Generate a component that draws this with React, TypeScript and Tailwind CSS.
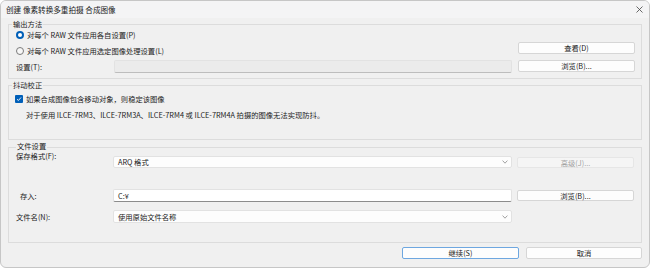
import React from "react";

const FONT = "font-['Noto_Sans_CJK_SC','Noto_Sans',sans-serif]";
const T = "text-[7.3px] leading-[10px] text-[#222]";

function Btn({
  children,
  className = "",
  disabled = false,
  primary = false,
}: {
  children: React.ReactNode;
  className?: string;
  disabled?: boolean;
  primary?: boolean;
}) {
  const base =
    "flex items-center justify-center rounded-[2px] border text-[7.3px] leading-[10px]";
  const look = disabled
    ? "bg-[#f5f5f5] border-[#e6e6e6] text-[#a3a3a3]"
    : primary
    ? "bg-[#fdfdfd] border-[#6ea7e0] text-[#222]"
    : "bg-[#fdfdfd] border-[#d6d6d6] text-[#222]";
  return <div className={`${base} ${look} ${className}`}>{children}</div>;
}

function Chevron() {
  return (
    <svg width="6" height="4" viewBox="0 0 6 4" className="shrink-0">
      <path d="M0.6 0.6 L3 3.2 L5.4 0.6" stroke="#8a8a8a" strokeWidth="0.8" fill="none" />
    </svg>
  );
}

function Select({ value, className = "" }: { value: string; className?: string }) {
  return (
    <div
      className={`flex items-center justify-between rounded-[2px] border border-[#e2e2e2] bg-[#fdfdfd] pl-[4px] pr-[3px] ${className}`}
    >
      <span className={T}>{value}</span>
      <Chevron />
    </div>
  );
}

function Group({
  title,
  className = "",
  labelPos = "-top-[5px] left-[3px]",
  children,
}: {
  title: string;
  className?: string;
  labelPos?: string;
  children: React.ReactNode;
}) {
  return (
    <div className={`relative border border-[#dcdcdc] ${className}`}>
      <span
        className={`absolute ${labelPos} bg-[#f0f0f0] px-[1px] text-[7.3px] leading-[8px] text-[#222]`}
      >
        {title}
      </span>
      {children}
    </div>
  );
}

function Radio({ checked }: { checked?: boolean }) {
  return checked ? (
    <div className="flex h-[8px] w-[8px] items-center justify-center rounded-full bg-[#005fb8]">
      <div className="h-[4px] w-[4px] rounded-full bg-white" />
    </div>
  ) : (
    <div className="h-[8px] w-[8px] rounded-full border border-[#7a7a7a] bg-[#f7f7f7]" />
  );
}

function Checkbox() {
  return (
    <div className="flex h-[8px] w-[8px] items-center justify-center rounded-[1px] bg-[#005fb8]">
      <svg width="6" height="6" viewBox="0 0 6 6">
        <path d="M1 3.2 L2.4 4.5 L5 1.5" stroke="white" strokeWidth="0.9" fill="none" />
      </svg>
    </div>
  );
}

export default function App() {
  return (
    <div className={`h-[269px] w-[650px] bg-white ${FONT}`}>
      <div className="flex h-[268px] w-[650px] flex-col overflow-hidden rounded-[6px] border border-[#c6c6c6] bg-[#f0f0f0]">
        {/* Title bar */}
        <div className="flex h-[17px] shrink-0 items-center justify-between bg-[#f4f4f5] pl-[5px] pr-[6px]">
          <span className="text-[7.6px] leading-[10px] text-[#222]">创建 像素转换多重拍摄 合成图像</span>
          <svg width="7" height="7" viewBox="0 0 7 7">
            <path d="M0.5 0.5 L6.5 6.5 M6.5 0.5 L0.5 6.5" stroke="#444" strokeWidth="0.8" />
          </svg>
        </div>

        {/* Group 1 */}
        <Group title="输出方法" className="ml-[7px] mt-[6px] h-[55px] w-[634px] shrink-0">
          <div className="flex">
            <div className="flex flex-1 flex-col pr-[6px]">
              <div className="mt-[5px] flex h-[10px] items-center gap-[3px] pl-[7px]">
                <Radio checked />
                <span className={T}>对每个 RAW 文件应用各自设置(P)</span>
              </div>
              <div className="mt-[6px] flex h-[10px] items-center gap-[3px] pl-[7px]">
                <Radio />
                <span className={T}>对每个 RAW 文件应用选定图像处理设置(L)</span>
              </div>
              <div className="mt-[4px] flex items-center pl-[7px]">
                <span className={`w-[98px] ${T}`}>设置(T):</span>
                <div className="h-[13px] flex-1 rounded-[2px] border border-[#e2e2e2] border-b-[#bdbdbd] bg-[#ebebeb]" />
              </div>
            </div>
            <div className="mr-[6px] flex w-[117px] flex-col">
              <Btn className="mt-[17px] h-[12px]">查看(D)</Btn>
              <Btn className="mt-[6px] h-[12px]">浏览(B)...</Btn>
            </div>
          </div>
        </Group>

        {/* Group 2 */}
        <Group title="抖动校正" className="ml-[7px] mt-[6px] h-[55px] w-[634px] shrink-0">
          <div className="mt-[8px] flex h-[10px] items-center gap-[3px] pl-[6px]">
            <Checkbox />
            <span className={T}>如果合成图像包含移动对象，则稳定该图像</span>
          </div>
          <div className={`mt-[6px] h-[10px] pl-[17px] ${T}`}>
            对于使用 ILCE-7RM3、ILCE-7RM3A、ILCE-7RM4 或 ILCE-7RM4A 拍摄的图像无法实现防抖。
          </div>
        </Group>

        {/* Group 3 */}
        <Group
          title="文件设置"
          labelPos="-top-[6px] left-[7px]"
          className="ml-[7px] mt-[7px] h-[96px] w-[634px] shrink-0"
        >
          <div className="flex items-start pl-[7px] pt-[4px]">
            <span className="w-[97px] text-[7.3px] leading-[8px] text-[#222]">保存格式(F):</span>
            <Select value="ARQ 格式" className="mt-[4px] h-[12px] w-[399px]" />
            <Btn disabled className="ml-[5px] mt-[5px] h-[11px] w-[117px]">
              高级(J)...
            </Btn>
          </div>
          <div className="mt-[21px] flex items-center pl-[11px]">
            <span className={`w-[93px] ${T}`}>存入:</span>
            <div className="flex h-[13px] w-[399px] items-center rounded-[2px] border border-[#e2e2e2] border-b-[#8c8c8c] bg-white pl-[4px]">
              <span className={T}>C:¥</span>
            </div>
            <Btn className="ml-[5px] h-[11px] w-[117px]">浏览(B)...</Btn>
          </div>
          <div className="mt-[8px] flex items-center pl-[7px]">
            <span className={`w-[97px] ${T}`}>文件名(N):</span>
            <Select value="使用原始文件名称" className="h-[13px] w-[399px]" />
          </div>
        </Group>

        {/* Footer buttons */}
        <div className="ml-[401px] mt-[4px] flex gap-[7px]">
          <Btn primary className="h-[12px] w-[117px]">
            继续(S)
          </Btn>
          <Btn className="h-[12px] w-[116px]">取消</Btn>
        </div>
      </div>
    </div>
  );
}
